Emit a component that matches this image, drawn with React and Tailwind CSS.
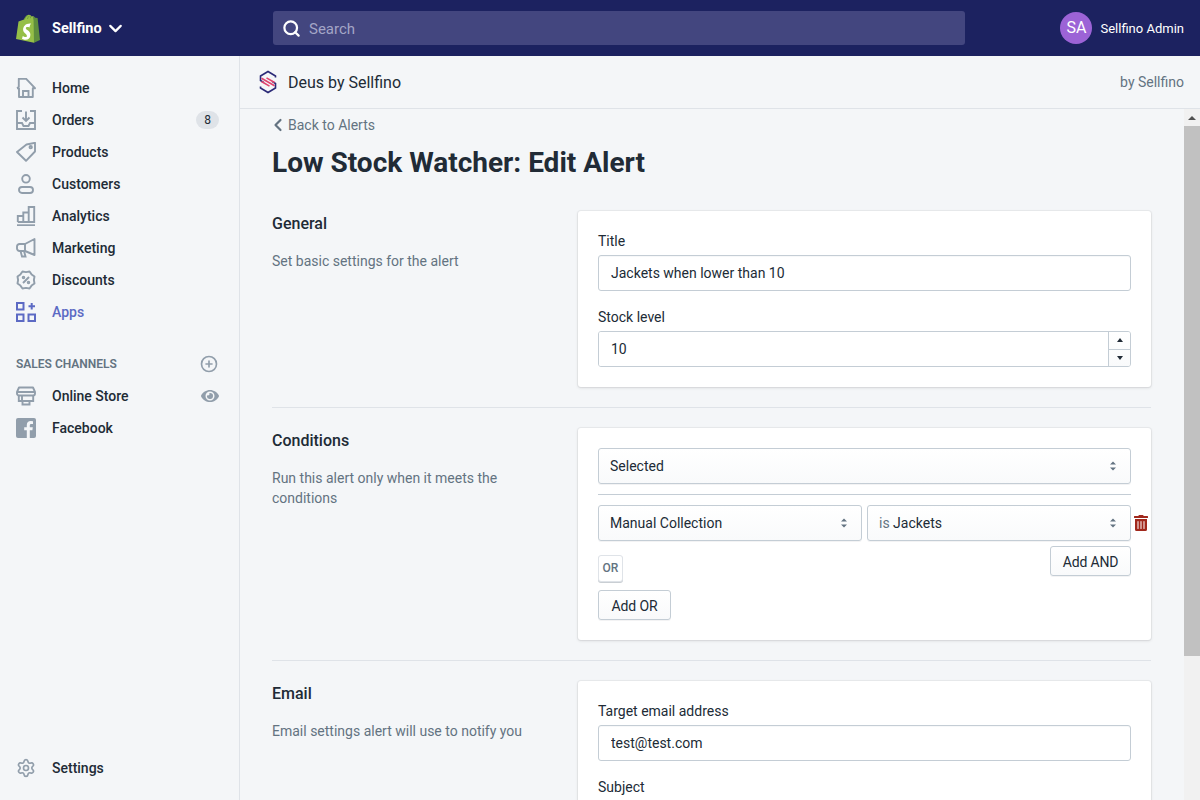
import { ChevronDown, ChevronLeft, CirclePlus, Search, Settings } from "lucide-react";
import { FaEye, FaTrashAlt } from "react-icons/fa";

const iconClass = "h-5 w-5 shrink-0 fill-none stroke-[#919eab] stroke-[1.9]";

// scalloped outline for the discounts icon
const badgePoints = Array.from({ length: 16 }, (_, i) => {
  const r = i % 2 ? 9.2 : 7.9;
  const a = (i * Math.PI) / 8;
  return `${(10 + r * Math.cos(a)).toFixed(2)},${(10 + r * Math.sin(a)).toFixed(2)}`;
}).join(" ");

function HomeIcon() {
  return (
    <svg viewBox="0 0 20 20" className={iconClass}>
      <path d="M2.800 9V.8h7.400l8.800 9.400h-2.200V19H3V10.200H1" strokeLinejoin="round" />
      <path d="M2.800 9 1 10.200M7 19v-6h5.500v6" />
    </svg>
  );
}

function OrdersIcon() {
  return (
    <svg viewBox="0 0 20 20" className={iconClass}>
      <path d="M6 1H1v18h18V1h-5" />
      <path d="M1 13h5l1.500 3h5l1.500-3h5" />
      <path d="M10 1.500V11M6.500 7.500 10 11l3.500-3.500" />
    </svg>
  );
}

function ProductsIcon() {
  return (
    <svg viewBox="0 0 20 20" className={iconClass}>
      <path d="M10.500 2.500 19 .8V9.500L10 18.800 1 10z" strokeLinejoin="round" />
      <circle cx="14.700" cy="5.200" r="1.200" />
    </svg>
  );
}

function CustomersIcon() {
  return (
    <svg viewBox="0 0 20 20" className={iconClass}>
      <circle cx="10" cy="4.800" r="3.800" />
      <rect x="3" y="13" width="14" height="6" rx="3" />
    </svg>
  );
}

function AnalyticsIcon() {
  return (
    <svg viewBox="0 0 20 20" className={iconClass}>
      <path d="M1 19.200h18" strokeWidth="1.800" />
      <path d="M1.800 16V10h5.500v6M7.300 16V6.500h5.400V16M12.700 16V1h5.500v15zM1.800 16h16.400" />
    </svg>
  );
}

function MarketingIcon() {
  return (
    <svg viewBox="0 0 20 20" className={iconClass}>
      <path d="M18.500 1v16L9 13H3.500A2.500 2.500 0 0 1 1 10.500v-2A2.500 2.500 0 0 1 3.500 6H9z" strokeLinejoin="round" />
      <path d="M4.500 13l1.500 5.500h3.500L8 13M9 6v7" />
    </svg>
  );
}

function DiscountsIcon() {
  return (
    <svg viewBox="0 0 20 20" className={iconClass}>
      <polygon points={badgePoints} strokeLinejoin="round" />
      <path d="M13 7 7 13" />
      <circle cx="7.500" cy="7.500" r=".8" />
      <circle cx="12.500" cy="12.500" r=".8" />
    </svg>
  );
}

function AppsIcon() {
  return (
    <svg viewBox="0 0 20 20" className="h-5 w-5 shrink-0 fill-none stroke-[#5c6ac4] stroke-2">
      <rect x="1" y="1" width="6.500" height="6.500" />
      <rect x="1" y="12.500" width="6.500" height="6.500" />
      <rect x="12.500" y="12.500" width="6.500" height="6.500" />
      <path d="M15.700 1v6.500M12.500 4.200H19" />
    </svg>
  );
}

function StoreIcon() {
  return (
    <svg viewBox="0 0 20 20" className={iconClass}>
      <path d="M3 1.500h14l2 4.500v1.500a2 2 0 0 1-2 2H3a2 2 0 0 1-2-2V6z" strokeLinejoin="round" />
      <path d="M1 6h18M2.800 9.500v5.500h14.400V9.500M6 9.500V15M6.500 15v3.500h7V15" />
    </svg>
  );
}

function FacebookIcon() {
  return (
    <svg viewBox="0 0 20 20" className="h-5 w-5 shrink-0">
      <rect width="20" height="20" rx="2" fill="#919eab" />
      <path d="M13.800 20v-7.700h2.600l.4-3h-3V7.400c0-.9.300-1.500 1.500-1.500H17V3.200a20 20 0 0 0-2.300-.1c-2.300 0-3.900 1.400-3.900 4v2.200H8.200v3h2.600V20z" fill="#f4f6f8" />
    </svg>
  );
}

function ShopifyLogo() {
  return (
    <svg viewBox="0 0 26 29" className="h-[29px] w-[26px] shrink-0">
      <path d="M1 25 3.500 7.500 9 5.500C10 2.500 12 .8 14 .8c1.300 0 2 .8 2.500 1.700L18.500 2 21 24 19 28.800z" fill="#95bf47" />
      <path d="M18.500 2l1.800 1.800 2.300.3L25 26l-6 2.800z" fill="#5e8e3e" />
      <path d="M15.300 10.500 14.400 13.500c-2-.9-3.600-.3-3.600.8 0 1.700 4.600 2.300 4.600 6.500 0 3.300-2.100 5-4.700 5-2 0-3.700-1.100-3.700-1.100l.8-2.800s1.600 1.200 2.900 1.200c.9 0 1.200-.7 1.200-1.200 0-2.300-3.800-2.400-3.800-6.300 0-3.200 2.300-6.200 6.900-6.200.8 0 1.300.3 1.300.3z" fill="#fff" />
      <path d="M9.500 5.500C10 3.500 11.500 1.800 13 1.500M12.500 5c.3-1.200.8-2.500 1.800-3M15.500 4.200c0-.9-.1-1.500-.4-2" fill="none" stroke="#5e8e3e" strokeWidth=".7" />
    </svg>
  );
}

function DeusLogo() {
  return (
    <svg viewBox="0 0 18 24" className="h-6 w-[18px] shrink-0 fill-none stroke-[1.600]">
      <path d="M16.500 7.500V6L9 1.500 1.500 6v4.500L5 12.600" stroke="#2b2a77" />
      <path d="M1.500 16.500V18L9 22.500 16.500 18v-4.500L13 11.400" stroke="#2b2a77" />
      <path d="M2.500 8.200 15.500 15.800M2.500 11.500l8 4.600M7.500 7.900l8 4.600" stroke="#e0446f" />
    </svg>
  );
}

function NavItem({ icon, label, active, right }) {
  return (
    <div className="flex h-8 items-center gap-4 pl-4 pr-5">
      {icon}
      <span className={"flex-1 text-[14px] font-medium " + (active ? "text-[#5c6ac4]" : "text-[#212b36]")}>{label}</span>
      {right}
    </div>
  );
}

function Sidebar() {
  return (
    <aside className="flex w-[240px] shrink-0 flex-col border-r border-[#dfe3e8] bg-[#f4f6f8] pb-4 pt-4">
      <NavItem icon={<HomeIcon />} label="Home" />
      <NavItem
        icon={<OrdersIcon />}
        label="Orders"
        right={<span className="flex h-[18px] w-[23px] items-center justify-center rounded-full bg-[#dfe3e8] text-[12px] text-[#212b36]">8</span>}
      />
      <NavItem icon={<ProductsIcon />} label="Products" />
      <NavItem icon={<CustomersIcon />} label="Customers" />
      <NavItem icon={<AnalyticsIcon />} label="Analytics" />
      <NavItem icon={<MarketingIcon />} label="Marketing" />
      <NavItem icon={<DiscountsIcon />} label="Discounts" />
      <NavItem icon={<AppsIcon />} label="Apps" active />
      <div className="mt-6 mb-1 flex h-6 items-center justify-between pl-4 pr-[21px]">
        <span className="text-[12px] font-semibold uppercase text-[#637381]">Sales channels</span>
        <CirclePlus size={18} className="text-[#919eab]" strokeWidth={2.200} />
      </div>
      <NavItem icon={<StoreIcon />} label="Online Store" right={<FaEye size={18} className="text-[#919eab]" />} />
      <NavItem icon={<FacebookIcon />} label="Facebook" />
      <div className="mt-auto">
        <NavItem icon={<Settings size={20} className="shrink-0 text-[#919eab]" strokeWidth={2} />} label="Settings" />
      </div>
    </aside>
  );
}

function Field({ label, value, className }) {
  return (
    <div className={className}>
      <div className="mb-1 h-5 text-[14px] leading-5 text-[#212b36]">{label}</div>
      <input
        readOnly
        value={value}
        className="block h-9 w-full rounded-[3px] border border-[#c4cdd5] bg-white px-3 text-[14px] text-[#212b36] shadow-[inset_0_1px_0_rgba(99,115,129,0.05)] outline-none"
      />
    </div>
  );
}

function SelectArrows() {
  return (
    <svg viewBox="0 0 8 12" className="h-3 w-2 shrink-0 fill-[#637381]">
      <path d="M4 1.500 7 4.500H1zM4 10.500 1 7.500h6z" />
    </svg>
  );
}

function SelectBox({ children, className }) {
  return (
    <div className={"flex h-9 items-center justify-between rounded-[3px] border border-[#c4cdd5] bg-linear-to-b from-white to-[#f9fafb] pl-[11px] pr-[13px] text-[14px] text-[#212b36] shadow-[0_1px_0_rgba(22,29,37,0.05)] " + (className || "")}>
      <span>{children}</span>
      <SelectArrows />
    </div>
  );
}

function Button({ children, className }) {
  return (
    <div className={"flex h-[30px] items-center justify-center rounded-[3px] border border-[#c4cdd5] bg-linear-to-b from-white to-[#f9fafb] pt-0.5 text-[14px] tracking-[-0.15px] text-[#212b36] shadow-[0_1px_0_rgba(22,29,37,0.05)] " + className}>
      {children}
    </div>
  );
}

function Section({ title, text, children }) {
  return (
    <div className="flex">
      <div className="w-[306px] shrink-0 pr-10 pt-px">
        <h2 className="text-[16px] font-medium leading-6 text-[#212b36]">{title}</h2>
        <p className="mt-[15px] text-[14px] leading-5 text-[#637381]">{text}</p>
      </div>
      <div className="flex-1 rounded-[3px] bg-white p-5 shadow-[0_0_0_1px_rgba(63,63,68,0.05),0_1px_3px_0_rgba(63,63,68,0.15)]">
        {children}
      </div>
    </div>
  );
}

export default function App() {
  return (
    <div className="flex h-[800px] w-[1200px] flex-col overflow-hidden bg-[#f4f6f8] font-['Roboto',sans-serif]">
      <header className="flex h-14 shrink-0 items-center bg-[#1c2260]">
        <div className="flex w-[273px] shrink-0 items-center pl-[15px]">
          <ShopifyLogo />
          <span className="ml-[11px] pt-0.5 text-[14.500px] font-bold text-white">Sellfino</span>
          <ChevronDown size={21} className="ml-[3px] text-white" strokeWidth={2.500} />
        </div>
        <div className="flex h-[34px] w-[692px] items-center rounded-[3px] bg-[#43467f] pl-[9px]">
          <Search size={19} className="text-white" strokeWidth={2.800} />
          <span className="ml-[8px] pt-0.5 text-[15px] text-[#a3a5c6]">Search</span>
        </div>
        <div className="ml-auto flex items-center gap-2 pr-4">
          <div className="flex h-8 w-8 items-center justify-center rounded-full bg-[#9c63d6] text-[16px] text-white">SA</div>
          <span className="pt-0.5 text-[13px] text-white">Sellfino Admin</span>
        </div>
      </header>
      <div className="flex min-h-0 flex-1">
        <Sidebar />
        <main className="flex min-w-0 flex-1 flex-col">
          <div className="flex h-[53px] shrink-0 items-center justify-between border-b border-[#dfe3e8] pl-[19px] pr-4">
            <div className="flex items-center gap-[11px]">
              <DeusLogo />
              <span className="pt-0.5 text-[16px] text-[#212b36]">Deus by Sellfino</span>
            </div>
            <span className="text-[14px] text-[#637381]">by Sellfino</span>
          </div>
          <div className="flex min-h-0 flex-1">
            <div className="min-w-0 flex-1 overflow-hidden pl-8 pr-[33px] pt-1.5">
              <div className="flex h-5 items-center text-[14px] text-[#637381]">
                <ChevronLeft size={20} className="-ml-1" strokeWidth={2.600} />
                <span>Back to Alerts</span>
              </div>
              <h1 className="mb-[32px] mt-[12px] text-[28px] font-bold leading-8 text-[#212b36]">Low Stock Watcher: Edit Alert</h1>

              <Section title="General" text="Set basic settings for the alert">
                <Field label="Title" value="Jackets when lower than 10" />
                <div className="mt-4">
                  <div className="mb-1 h-5 text-[14px] leading-5 text-[#212b36]">Stock level</div>
                  <div className="flex h-9 overflow-hidden rounded-[3px] border border-[#c4cdd5] bg-white">
                    <input readOnly value="10" className="min-w-0 flex-1 bg-white px-3 text-[14px] text-[#212b36] outline-none" />
                    <div className="flex w-[22px] flex-col border-l border-[#c4cdd5] bg-linear-to-b from-white to-[#f9fafb]">
                      <div className="flex flex-1 items-center justify-center border-b border-[#c4cdd5]">
                        <div className="h-0 w-0 border-x-[3.500px] border-b-[4px] border-x-transparent border-b-[#212b36]" />
                      </div>
                      <div className="flex flex-1 items-center justify-center">
                        <div className="h-0 w-0 border-x-[3.500px] border-t-[4px] border-x-transparent border-t-[#212b36]" />
                      </div>
                    </div>
                  </div>
                </div>
              </Section>

              <div className="mb-5 mt-5 border-t border-[#dfe3e8]" />

              <Section title="Conditions" text="Run this alert only when it meets the conditions">
                <SelectBox>Selected</SelectBox>
                <div className="mb-[10px] mt-[10px] border-t border-[#c4cdd5]" />
                <div className="-mr-5 flex items-center">
                  <div className="flex flex-1 gap-[5px]">
                    <SelectBox className="flex-1">Manual Collection</SelectBox>
                    <SelectBox className="flex-1"><span className="text-[#637381]">is</span> Jackets</SelectBox>
                  </div>
                  <div className="ml-[2px] w-[18px]">
                    <FaTrashAlt size={16} className="text-[#a1281c]" />
                  </div>
                </div>
                <div className="mt-[5px] flex items-start justify-between">
                  <div className="flex flex-col items-start">
                    <div className="mt-[9px] flex h-[27px] w-[25px] items-center justify-center rounded-[3px] border border-[#dfe3e8] bg-white pb-0.5 text-[12px] font-medium text-[#637381] shadow-[0_1px_0_rgba(99,115,129,0.35)]">OR</div>
                    <div className="mt-2">
                      <Button className="w-[73px]">Add OR</Button>
                    </div>
                  </div>
                  <Button className="w-[81px]">Add AND</Button>
                </div>
              </Section>

              <div className="mb-5 mt-5 border-t border-[#dfe3e8]" />

              <Section title="Email" text="Email settings alert will use to notify you">
                <Field label="Target email address" value="test@test.com" />
                <Field className="mt-4" label="Subject" value="" />
              </Section>
            </div>
            <div className="flex w-4 shrink-0 flex-col bg-[#f1f1f1]">
              <div className="flex h-[17px] shrink-0 items-center justify-center">
                <div className="h-0 w-0 border-x-[4px] border-b-[4px] border-x-transparent border-b-[#505050]" />
              </div>
              <div className="h-[530px] bg-[#c1c1c1]" />
            </div>
          </div>
        </main>
      </div>
    </div>
  );
}
